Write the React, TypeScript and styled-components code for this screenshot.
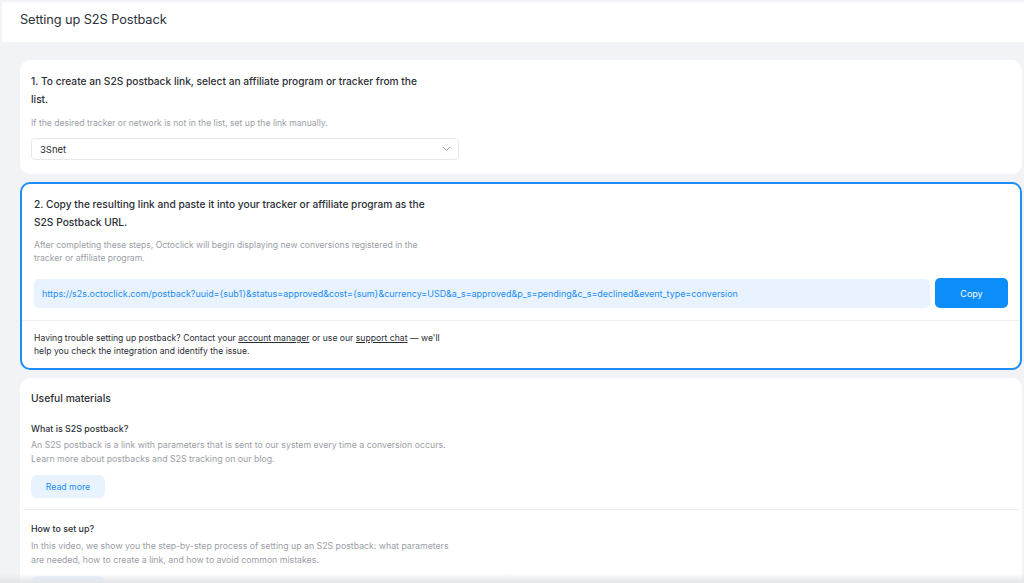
import styled, { createGlobalStyle } from "styled-components";

const GlobalStyle = createGlobalStyle`
  * { box-sizing: border-box; }
  html, body {
    margin: 0;
    padding: 0;
    background: #f2f3f7;
    font-family: Inter, "Noto Sans", Arial, sans-serif;
    color: #2b2e35;
  }
`;

const Page = styled.div`
  min-height: 583px;
  padding-top: 2px;
  padding-left: 2px;
  overflow: hidden;
`;

const Header = styled.div`
  height: 40px;
  background: #ffffff;
  display: flex;
  align-items: center;
  padding-left: 18px;
  padding-bottom: 5px;
  font-size: 12.8px;
  font-weight: 400;
  color: #2e3138;
  letter-spacing: -0.1px;
`;

const Main = styled.div`
  padding: 18px 2px 0 18px;
  display: flex;
  flex-direction: column;
  gap: 8px;
`;

const Card = styled.div<{ active?: boolean }>`
  background: #ffffff;
  border-radius: 10px;
  border: 2px solid ${(p) => (p.active ? "#1e8ef7" : "#ffffff")};
  overflow: hidden;
`;

const Section = styled.div`
  padding: 11px 12px 12px 9px;
`;

const ActiveSection = styled.div<{ divided?: boolean }>`
  padding: ${(p) => (p.divided ? "11px 12px 10px 12px" : "12px 12px 12px 12px")};
  border-top: ${(p) => (p.divided ? "1px solid #eef0f3" : "none")};
`;

const StepTitle = styled.div`
  font-size: 10.2px;
  font-weight: 500;
  line-height: 17.5px;
  max-width: 400px;
  color: #2b2e35;
`;

const Hint = styled.div<{ wide?: boolean }>`
  margin-top: ${(p) => (p.wide ? "8px" : "9px")};
  font-size: 8.6px;
  line-height: 13px;
  color: #9a9ea6;
  max-width: ${(p) => (p.wide ? "395px" : "400px")};
`;

const Select = styled.div`
  margin-top: 8px;
  width: 428px;
  height: 22px;
  border: 1px solid #e6e8ec;
  border-radius: 4px;
  display: flex;
  align-items: center;
  justify-content: space-between;
  padding: 0 7px 0 8px;
  font-size: 9.5px;
  color: #2b2e35;
`;

const LinkRow = styled.div`
  margin-top: 14px;
  display: flex;
  gap: 5px;
  align-items: stretch;
`;

const LinkBox = styled.div`
  flex: 1;
  height: 29px;
  background: #e9f3ff;
  border-radius: 5px;
  display: flex;
  align-items: center;
  padding-left: 8px;
  font-size: 8.95px;
  color: #1a8cf5;
  white-space: nowrap;
  overflow: hidden;
`;

const PrimaryButton = styled.button`
  width: 73px;
  height: 30px;
  margin-top: -1px;
  border: none;
  border-radius: 5px;
  background: #0d8df7;
  color: #ffffff;
  font-family: inherit;
  font-size: 9px;
`;

const HelpText = styled.div`
  font-size: 8.65px;
  line-height: 13px;
  color: #2b2e35;
  max-width: 415px;
  a {
    color: inherit;
    text-decoration: underline;
    text-underline-offset: 1px;
  }
`;

const MaterialsTitle = styled.div`
  font-size: 10.3px;
  font-weight: 500;
  line-height: 18px;
  color: #2b2e35;
`;

const Material = styled.div<{ first?: boolean }>`
  padding: ${(p) => (p.first ? "9px 10px 11px 9px" : "12px 10px 0 9px")};
  border-top: ${(p) => (p.first ? "none" : "1px solid #eef0f3")};
`;

const MaterialName = styled.div<{ spaced?: boolean }>`
  margin-top: ${(p) => (p.spaced ? "15px" : "0")};
  font-size: 8.9px;
  font-weight: 500;
  line-height: 14px;
  color: #2b2e35;
`;

const MaterialText = styled.div<{ tight?: boolean }>`
  margin-top: ${(p) => (p.tight ? "3px" : "4px")};
  font-size: 8.75px;
  line-height: 13.5px;
  color: #9a9ea6;
  max-width: 425px;
`;

const SoftButton = styled.button`
  margin-top: 9px;
  width: 74px;
  height: 23px;
  border: none;
  border-radius: 6px;
  background: #e9f3ff;
  color: #1a8cf5;
  font-family: inherit;
  font-size: 8.7px;
`;

const BottomFade = styled.div`
  position: fixed;
  left: 0;
  right: 0;
  bottom: 0;
  height: 10px;
  background: linear-gradient(to bottom, rgba(230, 231, 235, 0), rgba(225, 226, 230, 0.9));
  pointer-events: none;
`;

const Chevron = () => (
  <svg width="9" height="6" viewBox="0 0 9 6" fill="none">
    <path d="M1 1l3.5 3.5L8 1" stroke="#a0a4ab" strokeWidth="1" />
  </svg>
);

const postbackUrl =
  "https://s2s.octoclick.com/postback?uuid={sub1}&status=approved&cost={sum}&currency=USD&a_s=approved&p_s=pending&c_s=declined&event_type=conversion";

export default function App() {
  return (
    <Page>
      <GlobalStyle />
      <Header>Setting up S2S Postback</Header>
      <Main>
        <Card>
          <Section>
            <StepTitle>
              1. To create an S2S postback link, select an affiliate program or tracker from the list.
            </StepTitle>
            <Hint>If the desired tracker or network is not in the list, set up the link manually.</Hint>
            <Select>
              <span>3Snet</span>
              <Chevron />
            </Select>
          </Section>
        </Card>

        <Card active>
          <ActiveSection>
            <StepTitle>
              2. Copy the resulting link and paste it into your tracker or affiliate program as the S2S Postback URL.
            </StepTitle>
            <Hint wide>
              After completing these steps, Octoclick will begin displaying new conversions registered in the tracker
              or affiliate program.
            </Hint>
            <LinkRow>
              <LinkBox>{postbackUrl}</LinkBox>
              <PrimaryButton>Copy</PrimaryButton>
            </LinkRow>
          </ActiveSection>
          <ActiveSection divided>
            <HelpText>
              Having trouble setting up postback? Contact your <a>account manager</a> or use our{" "}
              <a>support chat</a> — we'll help you check the integration and identify the issue.
            </HelpText>
          </ActiveSection>
        </Card>

        <Card>
          <Material first>
            <MaterialsTitle>Useful materials</MaterialsTitle>
            <MaterialName spaced>What is S2S postback?</MaterialName>
            <MaterialText tight>
              An S2S postback is a link with parameters that is sent to our system every time a conversion occurs.
              <br />
              Learn more about postbacks and S2S tracking on our blog.
            </MaterialText>
            <SoftButton>Read more</SoftButton>
          </Material>
          <Material>
            <MaterialName>How to set up?</MaterialName>
            <MaterialText>
              In this video, we show you the step-by-step process of setting up an S2S postback: what parameters are
              needed, how to create a link, and how to avoid common mistakes.
            </MaterialText>
            <SoftButton>Watch</SoftButton>
          </Material>
        </Card>
      </Main>
      <BottomFade />
    </Page>
  );
}
